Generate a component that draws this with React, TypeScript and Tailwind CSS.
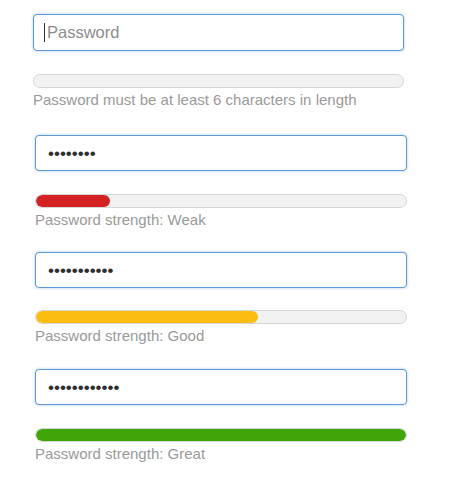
import React from "react";

const font = { fontFamily: '"Liberation Sans", Arial, Helvetica, sans-serif' };

function Bar({ pct, color }: { pct: number; color: string }) {
  return (
    <div className="h-[14px] rounded-full border border-[#d6d6d6] bg-[#f2f2f2] overflow-hidden">
      {pct > 0 && (
        <div
          className="h-full rounded-full"
          style={{ width: `${pct}%`, backgroundColor: color }}
        />
      )}
    </div>
  );
}

function Field({ children, h }: { children: React.ReactNode; h: string }) {
  return (
    <div
      className={`${h} rounded-[4px] border border-[#5c9ad6] bg-white shadow-[0_0_3px_rgba(92,154,214,0.55)] flex items-center pl-[12px]`}
    >
      {children}
    </div>
  );
}

function Dots({ n }: { n: number }) {
  return (
    <span className="text-[17px] leading-none text-[#2e2e2e]">{"•".repeat(n)}</span>
  );
}

export default function App() {
  return (
    <div className="w-[451px] h-[480px] bg-white pt-[14px]" style={font}>
      <div className="ml-[33px] w-[371px]">
        <div className="h-[37px] rounded-[4px] border border-[#5c9ad6] bg-white shadow-[0_0_3px_rgba(92,154,214,0.55)] flex items-center pl-[10px]">
          <span className="w-px h-[19px] bg-[#333] mr-[2px]" />
          <span className="text-[16.5px] text-[#8c8c8c]">Password</span>
        </div>
        <div className="mt-[23px]">
          <Bar pct={0} color="#fff" />
        </div>
        <div className="mt-[2px] text-[15px] leading-5 text-[#9a9a9a]">
          Password must be at least 6 characters in length
        </div>
      </div>

      <div className="ml-[35px] w-[372px] mt-[25px]">
        <Field h="h-[36px]">
          <Dots n={8} />
        </Field>
        <div className="mt-[23px]">
          <Bar pct={20} color="#d42222" />
        </div>
        <div className="mt-[2px] text-[15px] leading-5 text-[#9a9a9a]">
          Password strength: Weak
        </div>
      </div>

      <div className="ml-[35px] w-[372px] mt-[22px]">
        <Field h="h-[36px]">
          <Dots n={11} />
        </Field>
        <div className="mt-[22px]">
          <Bar pct={60} color="#fbbd11" />
        </div>
        <div className="mt-[2px] text-[15px] leading-5 text-[#9a9a9a]">
          Password strength: Good
        </div>
      </div>

      <div className="ml-[35px] w-[372px] mt-[23px]">
        <Field h="h-[36px]">
          <Dots n={12} />
        </Field>
        <div className="mt-[23px]">
          <Bar pct={100} color="#3fa509" />
        </div>
        <div className="mt-[2px] text-[15px] leading-5 text-[#9a9a9a]">
          Password strength: Great
        </div>
      </div>
    </div>
  );
}
